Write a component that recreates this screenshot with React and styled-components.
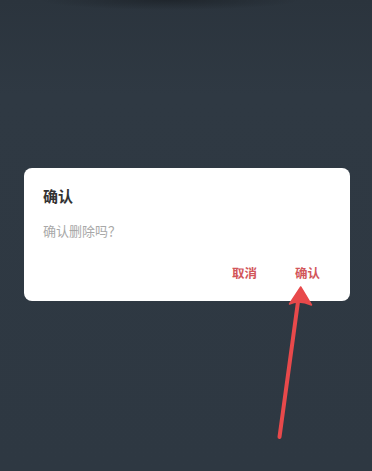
import React from 'react';
import styled, { createGlobalStyle } from 'styled-components';

const GlobalStyle = createGlobalStyle`
  html, body {
    margin: 0;
    padding: 0;
  }
  body {
    font-family: "Noto Sans CJK SC", "Noto Sans", sans-serif;
    background: #2e3842;
  }
`;

const Screen = styled.div`
  position: relative;
  height: 471px;
  overflow: hidden;
  padding: 168px 22px 0 24px;
  box-sizing: border-box;
  background:
    radial-gradient(ellipse 130px 10px at 170px 0px, rgba(20, 24, 28, 0.5), transparent),
    linear-gradient(180deg, #2b343d 0%, #2f3943 20%, #2e3842 100%);
`;

const Dialog = styled.div`
  background: #ffffff;
  border-radius: 8px;
  padding: 18px 0 0 19px;
  height: 133px;
  box-sizing: border-box;
  display: flex;
  flex-direction: column;
`;

const Title = styled.div`
  font-size: 15px;
  line-height: 20px;
  font-weight: 700;
  color: #333333;
`;

const Message = styled.div`
  margin-top: 15px;
  font-size: 13px;
  line-height: 20px;
  color: #a8a8a8;
`;

const Actions = styled.div`
  display: flex;
  justify-content: flex-end;
  gap: 14px;
  margin-top: 18px;
  padding-right: 18px;
`;

const ActionButton = styled.button`
  border: none;
  background: none;
  padding: 4px 12px;
  font-family: inherit;
  font-size: 12.5px;
  line-height: 20px;
  font-weight: 700;
  color: #d2565a;
`;

const Arrow = styled.svg`
  position: absolute;
  left: 0;
  top: 0;
  pointer-events: none;
`;

export default function App() {
  return (
    <>
      <GlobalStyle />
      <Screen>
        <Dialog>
          <Title>确认</Title>
          <Message>确认删除吗？</Message>
          <Actions>
            <ActionButton>取消</ActionButton>
            <ActionButton>确认</ActionButton>
          </Actions>
        </Dialog>
        <Arrow width="372" height="471" viewBox="0 0 372 471">
          <line x1="279.5" y1="437" x2="298.5" y2="298" stroke="#e8494b" strokeWidth="4" strokeLinecap="round" />
          <path d="M300.7 287 L289.5 304 Q299 299.5 311.5 305 Z" fill="#e8494b" stroke="#e8494b" strokeWidth="1.5" strokeLinejoin="round" />
        </Arrow>
      </Screen>
    </>
  );
}
